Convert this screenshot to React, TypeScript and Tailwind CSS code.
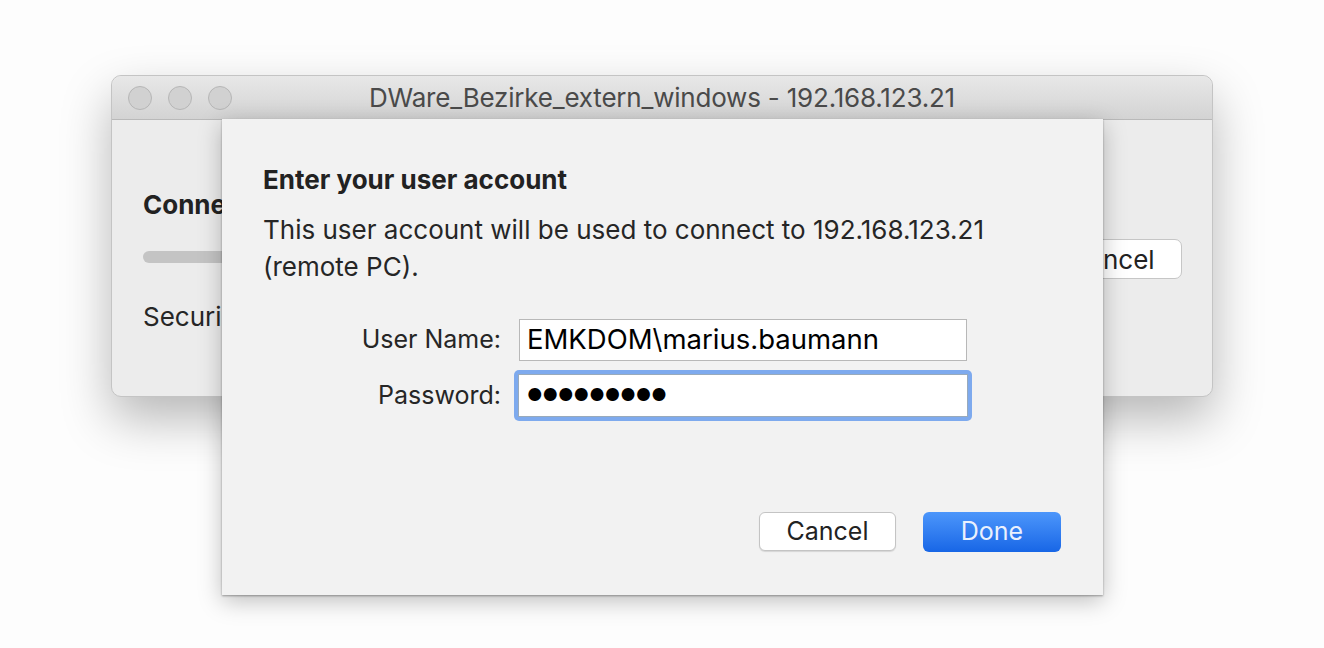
import React from "react";

export default function App() {
  const font = { fontFamily: "Inter, 'Noto Sans', sans-serif" };
  return (
    <div className="w-[1324px] h-[648px] bg-[#fdfdfd] overflow-hidden" style={font}>
      <div className="pt-[75px] pl-[111px]">
        <div className="relative w-[1102px] h-[322px] rounded-[10px] bg-[#ececec] border border-[#c4c4c4] shadow-[0_22px_50px_rgba(0,0,0,0.28)]">
          {/* title bar */}
          <div className="h-[44px] rounded-t-[10px] bg-gradient-to-b from-[#e8e8e8] to-[#d3d3d3] border-b border-[#b9b9b9] flex items-center relative">
            <div className="flex gap-[16px] pl-[16px]">
              <div className="w-[24px] h-[24px] rounded-full bg-[#d1d1d1] border border-[#b6b6b6]" />
              <div className="w-[24px] h-[24px] rounded-full bg-[#d1d1d1] border border-[#b6b6b6]" />
              <div className="w-[24px] h-[24px] rounded-full bg-[#d1d1d1] border border-[#b6b6b6]" />
            </div>
            <div className="absolute inset-0 flex items-center justify-center text-[26px] text-[#4a4a4a] tracking-[-0.2px]">
              DWare_Bezirke_extern_windows - 192.168.123.21
            </div>
          </div>
          {/* body */}
          <div className="pl-[31px] pr-[30px] pt-[69px] flex">
            <div className="flex-1">
              <div className="text-[26px] font-bold text-[#222] leading-[32px]">Connecting</div>
              <div className="mt-[30px] h-[12px] w-[300px] rounded-full bg-[#c4c4c4]" />
              <div className="mt-[38px] text-[26px] text-[#262626] leading-[32px]">Securing connection</div>
            </div>
            <div className="pt-[50px]">
              <div className="w-[140px] h-[40px] rounded-[7px] bg-white border border-[#c6c6c6] flex items-center justify-center text-[26px] text-[#222]">
                Cancel
              </div>
            </div>
          </div>
          {/* sheet */}
          <div className="absolute left-[110px] top-[43px] w-[881px] h-[476px] bg-[#f2f2f2] shadow-[0_6px_22px_rgba(0,0,0,0.25),0_1px_2px_rgba(0,0,0,0.35)] pl-[41px] pr-[41px] pt-[44px] flex flex-col">
            <div className="text-[26px] font-bold text-[#222] leading-[34px]">Enter your user account</div>
            <div className="mt-[14px] text-[26px] text-[#262626] leading-[37px]">
              This user account will be used to connect to 192.168.123.21
              <br />
              (remote PC).
            </div>
            <div className="mt-[34px] flex flex-col gap-[9px]">
              <div className="flex items-center">
                <div className="w-[238px] text-right text-[25px] text-[#262626]">User Name:</div>
                <div className="ml-[18px] w-[448px] h-[42px] bg-white border border-[#b8b8b8] flex items-center pl-[7px] text-[27.5px] text-black">
                  EMKDOM\marius.baumann
                </div>
              </div>
              <div className="flex items-center">
                <div className="w-[238px] text-right text-[25px] text-[#262626]">Password:</div>
                <div className="ml-[13px] w-[458px] h-[51px] rounded-[5px] bg-[#7eaaee] p-[4px]">
                  <div className="w-full h-full bg-white border border-[#9ab] flex items-center pl-[8px] text-[17px] text-black">
                    ●●●●●●●●●
                  </div>
                </div>
              </div>
            </div>
            <div className="flex-1" />
            <div className="flex justify-end gap-[27px] pb-[43px] pr-[1px]">
              <div className="w-[137px] h-[39px] rounded-[6px] bg-white border border-[#c4c4c4] shadow-[0_1px_1px_rgba(0,0,0,0.12)] flex items-center justify-center text-[25px] text-[#222]">
                Cancel
              </div>
              <div className="w-[138px] h-[40px] rounded-[6px] bg-gradient-to-b from-[#4c96fb] to-[#1766e6] flex items-center justify-center text-[25px] text-[#eaf1fd]">
                Done
              </div>
            </div>
          </div>
        </div>
      </div>
    </div>
  );
}
